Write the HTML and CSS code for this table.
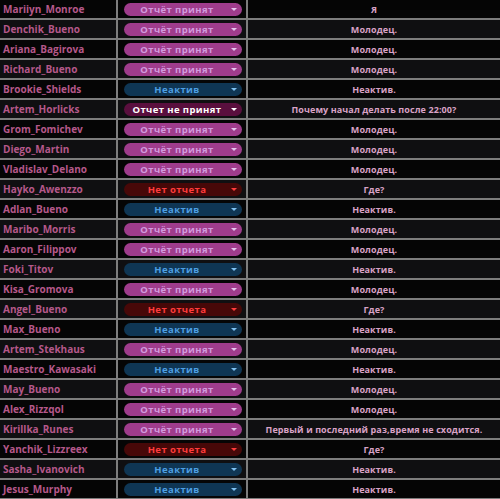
FILE: index.html
```html
<!DOCTYPE html>
<html lang="ru">
<head>
    <meta charset="UTF-8">
    <meta name="viewport" content="width=device-width, initial-scale=1.0">
    <title>Отчёты</title>
    <link rel="stylesheet" href="styles.css">
</head>
<body>
    <table class="sheet">
        <colgroup>
            <col class="col-name">
            <col class="col-status">
            <col class="col-note">
        </colgroup>
        <tbody>
            <tr><td class="name">Mariiyn_Monroe</td><td><span class="pill ok">Отчёт принят</span></td><td class="note">Я</td></tr>
            <tr><td class="name">Denchik_Bueno</td><td><span class="pill ok">Отчёт принят</span></td><td class="note">Молодец.</td></tr>
            <tr><td class="name">Ariana_Bagirova</td><td><span class="pill ok">Отчёт принят</span></td><td class="note">Молодец.</td></tr>
            <tr><td class="name">Richard_Bueno</td><td><span class="pill ok">Отчёт принят</span></td><td class="note">Молодец.</td></tr>
            <tr><td class="name">Brookie_Shields</td><td><span class="pill idle">Неактив</span></td><td class="note">Неактив.</td></tr>
            <tr><td class="name">Artem_Horlicks</td><td><span class="pill bad">Отчет не принят</span></td><td class="note">Почему начал делать после 22:00?</td></tr>
            <tr><td class="name">Grom_Fomichev</td><td><span class="pill ok">Отчёт принят</span></td><td class="note">Молодец.</td></tr>
            <tr><td class="name">Diego_Martin</td><td><span class="pill ok">Отчёт принят</span></td><td class="note">Молодец.</td></tr>
            <tr><td class="name">Vladislav_Delano</td><td><span class="pill ok">Отчёт принят</span></td><td class="note">Молодец.</td></tr>
            <tr><td class="name">Hayko_Awenzzo</td><td><span class="pill none">Нет отчета</span></td><td class="note">Где?</td></tr>
            <tr><td class="name">Adlan_Bueno</td><td><span class="pill idle">Неактив</span></td><td class="note">Неактив.</td></tr>
            <tr><td class="name">Maribo_Morris</td><td><span class="pill ok">Отчёт принят</span></td><td class="note">Молодец.</td></tr>
            <tr><td class="name">Aaron_Filippov</td><td><span class="pill ok">Отчёт принят</span></td><td class="note">Молодец.</td></tr>
            <tr><td class="name">Foki_Titov</td><td><span class="pill idle">Неактив</span></td><td class="note">Неактив.</td></tr>
            <tr><td class="name">Kisa_Gromova</td><td><span class="pill ok">Отчёт принят</span></td><td class="note">Молодец.</td></tr>
            <tr><td class="name">Angel_Bueno</td><td><span class="pill none">Нет отчета</span></td><td class="note">Где?</td></tr>
            <tr><td class="name">Max_Bueno</td><td><span class="pill idle">Неактив</span></td><td class="note">Неактив.</td></tr>
            <tr><td class="name">Artem_Stekhaus</td><td><span class="pill ok">Отчёт принят</span></td><td class="note">Молодец.</td></tr>
            <tr><td class="name">Maestro_Kawasaki</td><td><span class="pill idle">Неактив</span></td><td class="note">Неактив.</td></tr>
            <tr><td class="name">May_Bueno</td><td><span class="pill ok">Отчёт принят</span></td><td class="note">Молодец.</td></tr>
            <tr><td class="name">Alex_Rizzqol</td><td><span class="pill ok">Отчёт принят</span></td><td class="note">Молодец.</td></tr>
            <tr><td class="name">Kirillka_Runes</td><td><span class="pill ok">Отчёт принят</span></td><td class="note">Первый и последний раз,время не сходится.</td></tr>
            <tr><td class="name">Yanchik_Lizzreex</td><td><span class="pill none">Нет отчета</span></td><td class="note">Где?</td></tr>
            <tr><td class="name">Sasha_Ivanovich</td><td><span class="pill idle">Неактив</span></td><td class="note">Неактив.</td></tr>
            <tr><td class="name">Jesus_Murphy</td><td><span class="pill idle">Неактив</span></td><td class="note">Неактив.</td></tr>
        </tbody>
    </table>
</body>
</html>
```
FILE: styles.css
```css
body {
    margin: 0;
    background: #0b0b0c;
    font-family: "Open Sans", "Noto Sans", sans-serif;
    font-weight: 700;
}
.sheet {
    width: 500px;
    border-collapse: collapse;
    table-layout: fixed;
}
.col-name { width: 117px; }
.col-status { width: 130px; }
.col-note { width: 253px; }

.sheet td {
    height: 18px;
    padding: 0;
    border-bottom: 2px solid #7d7d7d;
    border-right: 2px solid #7d7d7d;
    vertical-align: middle;
    white-space: nowrap;
    overflow: hidden;
}
.sheet td:last-child { border-right: none; }
.sheet tr:nth-child(odd) { background: #050505; }
.sheet tr:nth-child(even) { background: #0f0f11; }

.name {
    padding-left: 3px !important;
    color: #b5588a;
    font-size: 10px;
}
.note {
    text-align: center;
    color: #d9a2c6;
    font-size: 9px;
    letter-spacing: 0.1px;
}

.pill {
    position: relative;
    display: block;
    margin-left: 6px;
    width: 118px;
    height: 13px;
    line-height: 13px;
    box-sizing: border-box;
    padding-right: 12px;
    border-radius: 7px;
    text-align: center;
    font-size: 9.5px;
    letter-spacing: 0.4px;
}
.pill::after {
    content: "";
    position: absolute;
    right: 5px;
    top: 5px;
    border-left: 3px solid transparent;
    border-right: 3px solid transparent;
    border-top: 3px solid currentColor;
}
.ok { background: #9f3c8c; color: #d29ade; }
.ok::after { border-top-color: #e6c6ee; }
.idle { background: #0f3654; color: #4d9fe3; }
.idle::after { border-top-color: #7fc0f0; }
.none { background: #470808; color: #ff3c3c; }
.bad { background: #5a0f3e; color: #ffffff; }
```
